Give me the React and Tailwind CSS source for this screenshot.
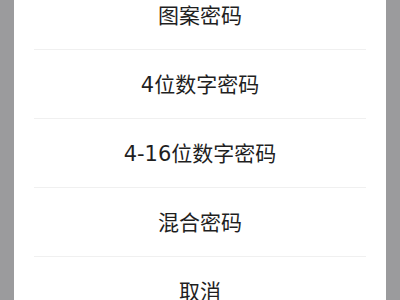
import React from "react";

const options = ["图案密码", "4位数字密码", "4-16位数字密码", "混合密码", "取消"];

export default function App() {
  return (
    <div
      className="h-[300px] w-[400px] overflow-hidden bg-[#9b9b9d] px-[14px]"
      style={{ fontFamily: '"DejaVu Sans", "Noto Sans CJK SC", sans-serif' }}
    >
      <div className="flex h-full flex-col overflow-hidden bg-white">
        <div className="-mt-[19px] flex flex-col">
          {options.map((label, i) => (
            <div key={label}>
              <div className="flex h-[68px] items-center justify-center pt-[3px] text-[21px] text-[#1f1f1f]">
                {label}
              </div>
              {i < options.length - 1 && (
                <div className="mx-[20px] h-px bg-[#f0f0f0]" />
              )}
            </div>
          ))}
        </div>
      </div>
    </div>
  );
}
